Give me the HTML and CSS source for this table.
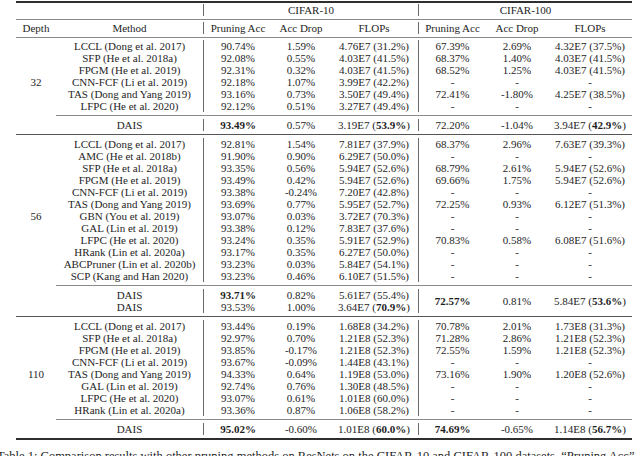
FILE: index.html
```html
<!DOCTYPE html>
<html>
<head>
<meta charset="utf-8">
<link rel="stylesheet" href="styles.css">
</head>
<body>
<div class="page">
  <div class="tbl">
    <div class="rule top"></div>

    <div class="c span2"></div><div class="c b span3">CIFAR-10</div><div class="c b span3">CIFAR-100</div>
    <div class="rule thin"></div>
    <div class="c">Depth</div><div class="c">Method</div><div class="c b">Pruning Acc</div><div class="c">Acc Drop</div><div class="c">FLOPs</div><div class="c b">Pruning Acc</div><div class="c">Acc Drop</div><div class="c">FLOPs</div>
    <div class="rule thin"></div>

    <div class="c"></div><div class="c">LCCL (Dong et al. 2017)</div><div class="c b">90.74%</div><div class="c">1.59%</div><div class="c">4.76E7 (31.2%)</div><div class="c b">67.39%</div><div class="c">2.69%</div><div class="c">4.32E7 (37.5%)</div>
    <div class="c"></div><div class="c">SFP (He et al. 2018a)</div><div class="c b">92.08%</div><div class="c">0.55%</div><div class="c">4.03E7 (41.5%)</div><div class="c b">68.37%</div><div class="c">1.40%</div><div class="c">4.03E7 (41.5%)</div>
    <div class="c"></div><div class="c">FPGM (He et al. 2019)</div><div class="c b">92.31%</div><div class="c">0.32%</div><div class="c">4.03E7 (41.5%)</div><div class="c b">68.52%</div><div class="c">1.25%</div><div class="c">4.03E7 (41.5%)</div>
    <div class="c">32</div><div class="c">CNN-FCF (Li et al. 2019)</div><div class="c b">92.18%</div><div class="c">1.07%</div><div class="c">3.99E7 (42.2%)</div><div class="c b">-</div><div class="c">-</div><div class="c">-</div>
    <div class="c"></div><div class="c">TAS (Dong and Yang 2019)</div><div class="c b">93.16%</div><div class="c">0.73%</div><div class="c">3.50E7 (49.4%)</div><div class="c b">72.41%</div><div class="c">-1.80%</div><div class="c">4.25E7 (38.5%)</div>
    <div class="c"></div><div class="c">LFPC (He et al. 2020)</div><div class="c b">92.12%</div><div class="c">0.51%</div><div class="c">3.27E7 (49.4%)</div><div class="c b">-</div><div class="c">-</div><div class="c">-</div>
    <div class="rule part"></div>
    <div class="c"></div><div class="c">DAIS</div><div class="c b"><b>93.49%</b></div><div class="c">0.57%</div><div class="c">3.19E7 (<b>53.9%</b>)</div><div class="c b">72.20%</div><div class="c">-1.04%</div><div class="c">3.94E7 (<b>42.9%</b>)</div>
    <div class="rule grp"></div>

    <div class="c"></div><div class="c">LCCL (Dong et al. 2017)</div><div class="c b">92.81%</div><div class="c">1.54%</div><div class="c">7.81E7 (37.9%)</div><div class="c b">68.37%</div><div class="c">2.96%</div><div class="c">7.63E7 (39.3%)</div>
    <div class="c"></div><div class="c">AMC (He et al. 2018b)</div><div class="c b">91.90%</div><div class="c">0.90%</div><div class="c">6.29E7 (50.0%)</div><div class="c b">-</div><div class="c">-</div><div class="c">-</div>
    <div class="c"></div><div class="c">SFP (He et al. 2018a)</div><div class="c b">93.35%</div><div class="c">0.56%</div><div class="c">5.94E7 (52.6%)</div><div class="c b">68.79%</div><div class="c">2.61%</div><div class="c">5.94E7 (52.6%)</div>
    <div class="c"></div><div class="c">FPGM (He et al. 2019)</div><div class="c b">93.49%</div><div class="c">0.42%</div><div class="c">5.94E7 (52.6%)</div><div class="c b">69.66%</div><div class="c">1.75%</div><div class="c">5.94E7 (52.6%)</div>
    <div class="c"></div><div class="c">CNN-FCF (Li et al. 2019)</div><div class="c b">93.38%</div><div class="c">-0.24%</div><div class="c">7.20E7 (42.8%)</div><div class="c b">-</div><div class="c">-</div><div class="c">-</div>
    <div class="c"></div><div class="c">TAS (Dong and Yang 2019)</div><div class="c b">93.69%</div><div class="c">0.77%</div><div class="c">5.95E7 (52.7%)</div><div class="c b">72.25%</div><div class="c">0.93%</div><div class="c">6.12E7 (51.3%)</div>
    <div class="c">56</div><div class="c">GBN (You et al. 2019)</div><div class="c b">93.07%</div><div class="c">0.03%</div><div class="c">3.72E7 (70.3%)</div><div class="c b">-</div><div class="c">-</div><div class="c">-</div>
    <div class="c"></div><div class="c">GAL (Lin et al. 2019)</div><div class="c b">93.38%</div><div class="c">0.12%</div><div class="c">7.83E7 (37.6%)</div><div class="c b">-</div><div class="c">-</div><div class="c">-</div>
    <div class="c"></div><div class="c">LFPC (He et al. 2020)</div><div class="c b">93.24%</div><div class="c">0.35%</div><div class="c">5.91E7 (52.9%)</div><div class="c b">70.83%</div><div class="c">0.58%</div><div class="c">6.08E7 (51.6%)</div>
    <div class="c"></div><div class="c">HRank (Lin et al. 2020a)</div><div class="c b">93.17%</div><div class="c">0.35%</div><div class="c">6.27E7 (50.0%)</div><div class="c b">-</div><div class="c">-</div><div class="c">-</div>
    <div class="c"></div><div class="c">ABCPruner (Lin et al. 2020b)</div><div class="c b">93.23%</div><div class="c">0.03%</div><div class="c">5.84E7 (54.1%)</div><div class="c b">-</div><div class="c">-</div><div class="c">-</div>
    <div class="c"></div><div class="c">SCP (Kang and Han 2020)</div><div class="c b">93.23%</div><div class="c">0.46%</div><div class="c">6.10E7 (51.5%)</div><div class="c b">-</div><div class="c">-</div><div class="c">-</div>
    <div class="rule part"></div>
    <div class="c"></div><div class="c">DAIS</div><div class="c b"><b>93.71%</b></div><div class="c">0.82%</div><div class="c">5.61E7 (55.4%)</div><div class="c b m"><b>72.57%</b></div><div class="c m">0.81%</div><div class="c m">5.84E7 (<b>53.6%</b>)</div>
    <div class="c"></div><div class="c">DAIS</div><div class="c b">93.53%</div><div class="c">1.00%</div><div class="c">3.64E7 (<b>70.9%</b>)</div>
    <div class="rule grp"></div>

    <div class="c"></div><div class="c">LCCL (Dong et al. 2017)</div><div class="c b">93.44%</div><div class="c">0.19%</div><div class="c">1.68E8 (34.2%)</div><div class="c b">70.78%</div><div class="c">2.01%</div><div class="c">1.73E8 (31.3%)</div>
    <div class="c"></div><div class="c">SFP (He et al. 2018a)</div><div class="c b">92.97%</div><div class="c">0.70%</div><div class="c">1.21E8 (52.3%)</div><div class="c b">71.28%</div><div class="c">2.86%</div><div class="c">1.21E8 (52.3%)</div>
    <div class="c"></div><div class="c">FPGM (He et al. 2019)</div><div class="c b">93.85%</div><div class="c">-0.17%</div><div class="c">1.21E8 (52.3%)</div><div class="c b">72.55%</div><div class="c">1.59%</div><div class="c">1.21E8 (52.3%)</div>
    <div class="c"></div><div class="c">CNN-FCF (Li et al. 2019)</div><div class="c b">93.67%</div><div class="c">-0.09%</div><div class="c">1.44E8 (43.1%)</div><div class="c b">-</div><div class="c">-</div><div class="c">-</div>
    <div class="c">110</div><div class="c">TAS (Dong and Yang 2019)</div><div class="c b">94.33%</div><div class="c">0.64%</div><div class="c">1.19E8 (53.0%)</div><div class="c b">73.16%</div><div class="c">1.90%</div><div class="c">1.20E8 (52.6%)</div>
    <div class="c"></div><div class="c">GAL (Lin et al. 2019)</div><div class="c b">92.74%</div><div class="c">0.76%</div><div class="c">1.30E8 (48.5%)</div><div class="c b">-</div><div class="c">-</div><div class="c">-</div>
    <div class="c"></div><div class="c">LFPC (He et al. 2020)</div><div class="c b">93.07%</div><div class="c">0.61%</div><div class="c">1.01E8 (60.0%)</div><div class="c b">-</div><div class="c">-</div><div class="c">-</div>
    <div class="c"></div><div class="c">HRank (Lin et al. 2020a)</div><div class="c b">93.36%</div><div class="c">0.87%</div><div class="c">1.06E8 (58.2%)</div><div class="c b">-</div><div class="c">-</div><div class="c">-</div>
    <div class="rule part"></div>
    <div class="c"></div><div class="c">DAIS</div><div class="c b"><b>95.02%</b></div><div class="c">-0.60%</div><div class="c">1.01E8 (<b>60.0%</b>)</div><div class="c b"><b>74.69%</b></div><div class="c">-0.65%</div><div class="c">1.14E8 (<b>56.7%</b>)</div>
    <div class="rule bottom"></div>
  </div>
</div>
<p class="cap">Table 1: Comparison results with other pruning methods on ResNets on the CIFAR-10 and CIFAR-100 datasets. “Pruning Acc”</p>
</body>
</html>
```

FILE: styles.css
```css
html, body {
  margin: 0;
  padding: 0;
  background: #ffffff;
}

body {
  width: 640px;
  height: 456px;
  overflow: hidden;
  font-family: "Liberation Serif", "Times New Roman", serif;
  color: #1e1e1e;
}

.page {
  padding-left: 16px;
}

.tbl {
  display: grid;
  grid-template-columns: 40px 147px 69px 58px 88px 68px 62px 84px;
  font-size: 11px;
  line-height: 12px;
}

.c {
  text-align: center;
  white-space: nowrap;
}

.c b {
  font-weight: bold;
}

.b {
  border-left: 1px solid #6a6a6a;
}

.span2 {
  grid-column: span 2;
}

.span3 {
  grid-column: span 3;
}

.m {
  grid-row: span 2;
  display: flex;
  align-items: center;
  justify-content: center;
}

.rule {
  grid-column: 1 / -1;
}

.rule.top {
  height: 2px;
  margin: 1px 0 1px;
  background: #2e2e2e;
}

.rule.thin {
  height: 1px;
  margin: 2.5px 0;
  background: #8a8a8a;
}

.rule.part {
  grid-column: 2 / -1;
  height: 1px;
  margin: 3px 0;
  background: #8a8a8a;
}

.rule.grp {
  height: 1.5px;
  margin: 2.75px 0;
  background: #555555;
}

.rule.bottom {
  height: 2px;
  margin: 3px 0 0;
  background: #2e2e2e;
}

.cap {
  margin: 9px 0 0;
  text-indent: -3px;
  white-space: nowrap;
  font-size: 12.5px;
  line-height: 14px;
}
```
